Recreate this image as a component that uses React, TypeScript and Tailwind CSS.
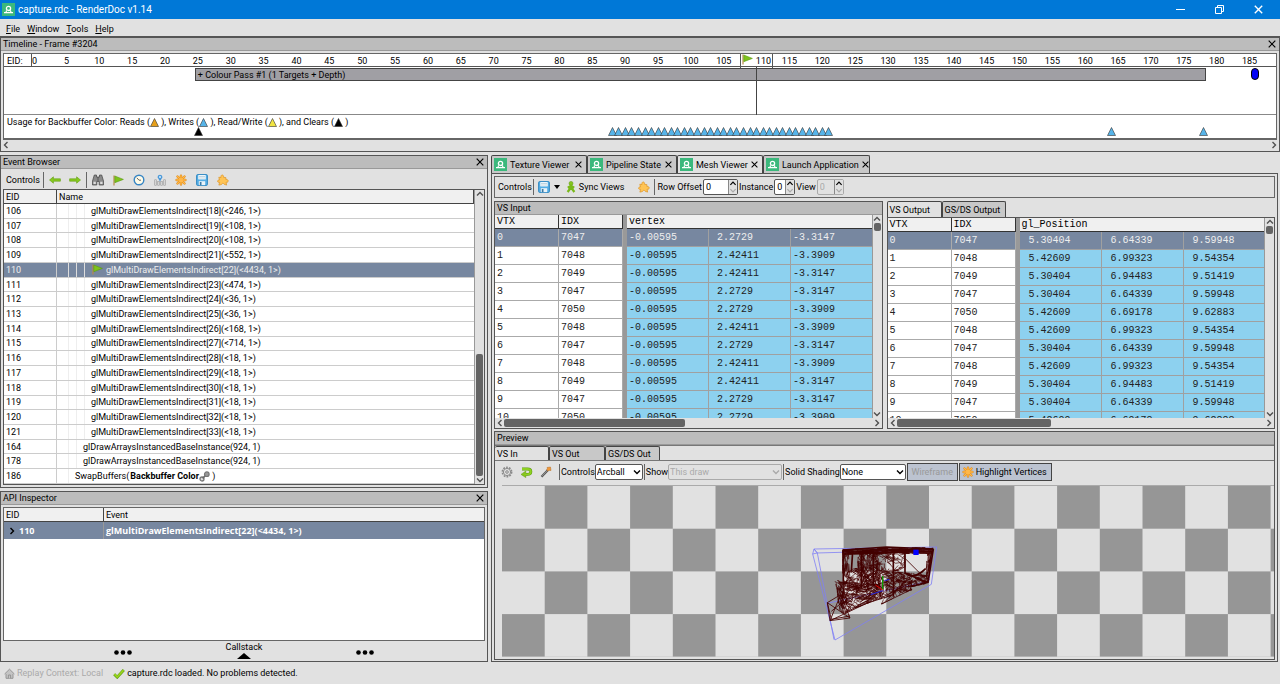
import type { ReactNode } from "react";
import clsx from "clsx";

const events = [
  { eid: 106, name: "glMultiDrawElementsIndirect[18](<246, 1>)", depth: 3 },
  { eid: 107, name: "glMultiDrawElementsIndirect[19](<108, 1>)", depth: 3 },
  { eid: 108, name: "glMultiDrawElementsIndirect[20](<108, 1>)", depth: 3 },
  { eid: 109, name: "glMultiDrawElementsIndirect[21](<552, 1>)", depth: 3 },
  { eid: 110, name: "glMultiDrawElementsIndirect[22](<4434, 1>)", depth: 3 },
  { eid: 111, name: "glMultiDrawElementsIndirect[23](<474, 1>)", depth: 3 },
  { eid: 112, name: "glMultiDrawElementsIndirect[24](<36, 1>)", depth: 3 },
  { eid: 113, name: "glMultiDrawElementsIndirect[25](<36, 1>)", depth: 3 },
  { eid: 114, name: "glMultiDrawElementsIndirect[26](<168, 1>)", depth: 3 },
  { eid: 115, name: "glMultiDrawElementsIndirect[27](<714, 1>)", depth: 3 },
  { eid: 116, name: "glMultiDrawElementsIndirect[28](<18, 1>)", depth: 3 },
  { eid: 117, name: "glMultiDrawElementsIndirect[29](<18, 1>)", depth: 3 },
  { eid: 118, name: "glMultiDrawElementsIndirect[30](<18, 1>)", depth: 3 },
  { eid: 119, name: "glMultiDrawElementsIndirect[31](<18, 1>)", depth: 3 },
  { eid: 120, name: "glMultiDrawElementsIndirect[32](<18, 1>)", depth: 3 },
  { eid: 121, name: "glMultiDrawElementsIndirect[33](<18, 1>)", depth: 3 },
  { eid: 164, name: "glDrawArraysInstancedBaseInstance(924, 1)", depth: 2 },
  { eid: 178, name: "glDrawArraysInstancedBaseInstance(924, 1)", depth: 2 },
  { eid: 186, name: "SwapBuffers(", depth: 1 },
];

const indices = ["7047", "7048", "7049", "7047", "7050", "7048", "7047", "7048", "7049", "7047", "7050"];

const vsInput: Record<string, string[]> = {
  "7047": ["-0.00595", "2.2729", "-3.3147"],
  "7048": ["-0.00595", "2.42411", "-3.3909"],
  "7049": ["-0.00595", "2.42411", "-3.3147"],
  "7050": ["-0.00595", "2.2729", "-3.3909"],
};

const vsOutput: Record<string, string[]> = {
  "7047": ["5.30404", "6.64339", "9.59948"],
  "7048": ["5.42609", "6.99323", "9.54354"],
  "7049": ["5.30404", "6.94483", "9.51419"],
  "7050": ["5.42609", "6.69178", "9.62883"],
};

const ticks = Array.from({ length: 37 }, (_, i) => (i + 1) * 5);
const writes = [...Array.from({ length: 34 }, (_, i) => 88 + i), 164, 178];

// event id -> percentage along the timeline
const at = (eid: number) => ((eid * 6.57 + 30) / 1273) * 100;

/* ---------- icons ---------- */

function Logo() {
  return (
    <svg viewBox="0 0 13 13" className="size-[13px] shrink-0">
      <rect width="13" height="13" fill="#3bb87c" />
      <circle cx="6.5" cy="5.4" r="2.1" fill="none" stroke="#fff" strokeWidth="1.3" />
      <path d="M2 9.6h9M4.6 7.4l-.6 2M8.4 7.4l.6 2" fill="none" stroke="#fff" strokeWidth="1.2" />
    </svg>
  );
}

function Close({ className = "size-2" }: { className?: string }) {
  return (
    <svg viewBox="0 0 8 8" className={className} fill="none" stroke="currentColor" strokeWidth="1.2">
      <path d="M.7.7l6.6 6.6M7.3.7L.7 7.3" />
    </svg>
  );
}

function Flag() {
  return (
    <svg viewBox="0 0 11 11" className="size-[11px] shrink-0">
      <path d="M1 .5v10" stroke="#b98a4a" strokeWidth="1.2" />
      <path d="M1.8 1l8.6 3.4-8.6 3.3z" fill="#7fc31c" stroke="#5a9a12" strokeWidth=".6" />
    </svg>
  );
}

function Arrow({ right = false }: { right?: boolean }) {
  return (
    <svg viewBox="0 0 12 8" className={clsx("h-2 w-3", right && "rotate-180")}>
      <path d="M.5 4L4.4.8v2h7v2.4h-7v2z" fill="#86c81e" stroke="#62a010" strokeWidth=".6" />
    </svg>
  );
}

function Binoculars() {
  return (
    <svg viewBox="0 0 12 12" className="size-3">
      <path d="M2.3 1h2.2v2h3V1h2.2l1.8 6v4H7.2V7.5H4.8V11H.5V7z" fill="#8a8a8a" stroke="#444" strokeWidth=".7" />
      <path d="M1.5 7.8h2.3v2.2H1.5zM8.2 7.8h2.3v2.2H8.2z" fill="#ddd" />
      <path d="M6 3v4" stroke="#444" strokeWidth=".7" />
    </svg>
  );
}

function Clock() {
  return (
    <svg viewBox="0 0 12 12" className="size-3">
      <circle cx="6" cy="6" r="4.8" fill="#fffbe8" stroke="#3685c5" strokeWidth="1.4" />
      <path d="M3.8 3.8L6 6.2h2" fill="none" stroke="#666" />
    </svg>
  );
}

function Counter() {
  return (
    <svg viewBox="0 0 12 12" className="size-3">
      <path d="M1.5 11.5V5.5M4.5 11.5V7M7.5 11.5V7M10.5 11.5V5.5" stroke="#929292" strokeWidth="2.1" />
      <path d="M1.5 11V6M4.5 11V7.5M7.5 11V7.5M10.5 11V6" stroke="#d5d5d5" />
      <path d="M6 7.4L3.7 3.4C3.3-.2 8.7-.2 8.3 3.4z" fill="#4c99d8" />
      <circle cx="6" cy="3" r="1" fill="#d9efff" />
    </svg>
  );
}

function Asterisk() {
  return (
    <svg viewBox="0 0 12 12" className="size-3 shrink-0" strokeLinecap="round">
      <path d="M6 4.2V1.6M6 7.8v2.6M4 6H1.6M8 6h2.4M4.6 4.6L2.5 2.5M7.4 4.6l2.1-2.1M4.6 7.4L2.5 9.5M7.4 7.4l2.1 2.1" stroke="#df8a17" strokeWidth="2.4" />
      <path d="M6 6V1.6M6 6v4.4M6 6H1.6M6 6h4.4M6 6L2.5 2.5M6 6l3.5-3.5M6 6L2.5 9.5M6 6l3.5 3.5" stroke="#ffb84a" strokeWidth="1.3" />
    </svg>
  );
}

function Save() {
  return (
    <svg viewBox="0 0 12 12" className="size-3">
      <rect x=".6" y=".6" width="10.8" height="10.8" rx="1" fill="#55aee5" stroke="#3389c2" />
      <path d="M2.3 1.1h7.4v4.3H2.3z" fill="#fff" />
      <path d="M3 2.5h6M3 4h6" stroke="#9bc" strokeWidth=".6" />
      <path d="M2.8 7.2h6.4v3.9H2.8z" fill="#e9f3f9" />
      <path d="M3.8 8h1.7v3.1H3.8z" fill="#3d7aa4" />
    </svg>
  );
}

function Puzzle() {
  return (
    <svg viewBox="0 0 12 12" className="size-3">
      <path
        d="M1.8 3.2l2.2.4C3.1 0 7.3.3 6.5 3.3l2.5.4-.2 1.8c3.2-.5 3.2 3.3.3 2.7l.5 2.9-2.5-.9c-.9-1.3-1.7-1.3-2.6.3l-2.6.6.7-2.8C-.4 8.9.3 5.4 2.5 6z"
        fill="#ffc455"
        stroke="#e09a30"
        strokeWidth=".8"
      />
    </svg>
  );
}

function SyncPerson() {
  return (
    <svg viewBox="0 0 10 12" className="h-3 w-2.5">
      <circle cx="5" cy="2.4" r="2" fill="#86c61c" stroke="#5c9411" strokeWidth=".5" />
      <path d="M5 4v3.4M5 6.5L1.6 11M5 6.5L8.4 11M1.8 6.8L5 4.8l3.2 2" fill="none" stroke="#79b919" strokeWidth="2.2" />
    </svg>
  );
}

function Gear() {
  return (
    <svg viewBox="0 0 12 12" className="size-3" fill="none" stroke="#8a8a8a">
      <circle cx="6" cy="6" r="4.7" strokeWidth="1.5" strokeDasharray="1.8 1.15" />
      <circle cx="6" cy="6" r="3.6" />
      <circle cx="6" cy="6" r="1.3" />
    </svg>
  );
}

function Reset() {
  return (
    <svg viewBox="0 0 13 12" className="h-3 w-[13px]">
      <path d="M2 3h5.5c4.5 0 4.5 5.4 0 5.4H5" fill="none" stroke="#5c9a10" strokeWidth="2.8" />
      <path d="M5.8 5v6.6L1 8.4z" fill="#86c61c" stroke="#5c9a10" strokeWidth=".5" />
      <path d="M2 3h5.5c4.5 0 4.5 5.4 0 5.4H5" fill="none" stroke="#8ed022" strokeWidth="1.8" />
    </svg>
  );
}

function Wand() {
  return (
    <svg viewBox="0 0 12 12" className="size-3">
      <path d="M1.5 10.8L8 4" stroke="#555" strokeWidth="2.2" />
      <path d="M1.8 10.3L7.5 4.4" stroke="#aaa" strokeWidth=".7" />
      <path d="M7 1.5l3.5-.5.5 3.5-2.2-.2-.8.9-1.4-1.4.8-.9z" fill="#f39a3a" stroke="#b06a25" strokeWidth=".5" />
    </svg>
  );
}

function Link() {
  return (
    <svg viewBox="0 0 11 11" className="size-[11px]">
      <circle cx="3" cy="8" r="2" fill="#ddd" stroke="#777" strokeWidth="1.3" />
      <path d="M3.6 7.4l3.6-3.6" stroke="#666" strokeWidth="1.6" />
      <circle cx="7.8" cy="3.2" r="2.3" fill="#999" stroke="#777" strokeWidth="1.2" />
    </svg>
  );
}

function Home() {
  return (
    <svg viewBox="0 0 11 11" className="size-[11px]" fill="#c4c4c4" stroke="#909090" strokeWidth=".9">
      <path d="M2 5.5v4.8h7V5.5" />
      <path d="M.6 6l4.9-4.8L10.4 6M4.4 10.3V7h2.2v3.3" />
    </svg>
  );
}

function Tick() {
  return (
    <svg viewBox="0 0 12 11" className="h-[11px] w-3">
      <path d="M1.2 6.2l3 3L10.8 2" fill="none" stroke="#5c9a10" strokeWidth="2.8" />
      <path d="M1.4 6.2l2.8 2.8L10.6 2.2" fill="none" stroke="#98d41e" strokeWidth="1.8" />
    </svg>
  );
}

function Triangle({ fill }: { fill: string }) {
  return (
    <svg viewBox="0 0 9 9" className="size-[9px]">
      <path d="M4.5 .5l4 8h-8z" fill={fill} stroke="#333" strokeWidth=".6" />
    </svg>
  );
}

function Chevron({ dir, className }: { dir: "up" | "down" | "left" | "right"; className?: string }) {
  const d = {
    up: "M1 5.5l3-3 3 3",
    down: "M1 2.5l3 3 3-3",
    left: "M5.5 1l-3 3 3 3",
    right: "M2.5 1l3 3-3 3",
  }[dir];
  return (
    <svg viewBox="0 0 8 8" className={clsx("shrink-0", className ?? "size-2 text-[#505050]")} fill="none" stroke="currentColor" strokeWidth="1.4">
      <path d={d} />
    </svg>
  );
}

/* ---------- shared bits ---------- */

function Dock({ title, closable = true, children }: { title: string; closable?: boolean; children: ReactNode }) {
  return (
    <section className="flex min-h-0 min-w-0 flex-col border border-[#555] bg-[#e1e1e1]">
      <header className="flex h-[13px] shrink-0 items-center justify-between border-b border-[#999] bg-[#bcbcbc] px-0.5">
        <h2>{title}</h2>
        {closable && (
          <button aria-label={`Close ${title}`} className="px-px">
            <Close />
          </button>
        )}
      </header>
      {children}
    </section>
  );
}

function Separator() {
  return <div className="h-4 w-px shrink-0 bg-[#666]" />;
}

function HScroll({ thumb }: { thumb?: string }) {
  return (
    <div className="flex h-2.5 shrink-0 items-center bg-[#e1e1e1] px-px">
      <Chevron dir="left" />
      <div className="h-2 flex-1">{thumb && <div className={clsx("h-2 rounded-xs bg-[#646464]", thumb)} />}</div>
      <Chevron dir="right" />
    </div>
  );
}

function VScroll({ children }: { children: ReactNode }) {
  return (
    <div className="flex w-2.5 shrink-0 flex-col items-center border-l border-[#999] bg-[#e1e1e1]">
      <Chevron dir="up" />
      <div className="flex w-full flex-1 flex-col px-px">{children}</div>
      <Chevron dir="down" />
    </div>
  );
}

function Spin({ id, label, width, disabled }: { id: string; label: string; width: string; disabled?: boolean }) {
  return (
    <div className="flex items-center">
      <label htmlFor={id}>{label}</label>
      <div className={clsx("ml-px flex h-4 rounded-xs border", disabled ? "border-[#aaa]" : "border-[#555] bg-white")}>
        <input id={id} defaultValue="0" disabled={disabled} className={clsx("pl-0.5 disabled:text-[#aaa]", width)} />
        <div className="flex flex-col border-l border-[#888] bg-[#e1e1e1]">
          <button disabled={disabled} aria-label={`Increase ${label}`} className="h-[7px]">
            <Chevron dir="up" className="h-[7px] w-2" />
          </button>
          <button disabled={disabled} aria-label={`Decrease ${label}`} className="h-[7px] text-[#aaa]">
            <Chevron dir="down" className="h-[7px] w-2" />
          </button>
        </div>
      </div>
    </div>
  );
}

function Combo({ id, label, value, width, disabled }: { id: string; label: string; value: string; width: string; disabled?: boolean }) {
  return (
    <div className="flex items-center">
      <label htmlFor={id}>{label}</label>
      <div className={clsx("relative", width)}>
        <select
          id={id}
          disabled={disabled}
          className={clsx("block h-4 w-full appearance-none rounded-xs border px-px opacity-100", disabled ? "border-[#aaa] text-[#aaa]" : "border-[#555] bg-white")}
        >
          <option>{value}</option>
        </select>
        <Chevron dir="down" className={clsx("pointer-events-none absolute top-1 right-0.5 size-2", disabled && "text-[#aaa]")} />
      </div>
    </div>
  );
}

function VertexTable({ column, data, indent }: { column: string; data: Record<string, string[]>; indent: string }) {
  return (
    <table className="w-full table-fixed border-separate border-spacing-0 text-left font-['Liberation_Mono',monospace] text-[10px] leading-3">
      <colgroup>
        <col className="w-16" />
        <col className="w-16" />
        <col className="w-1" />
        <col className="w-[82px]" />
        <col className="w-[82px]" />
        <col className="w-[82px]" />
      </colgroup>
      <thead className="bg-[#f0f0f0]">
        <tr className="h-3.5">
          <th className="border-r border-b border-[#333] px-0.5 font-normal">VTX</th>
          <th className="border-r border-b border-[#333] px-0.5 font-normal">IDX</th>
          <th className="bg-[#999]" />
          <th colSpan={3} className="border-r border-b border-[#333] px-0.5 font-normal">{column}</th>
        </tr>
      </thead>
      <tbody>
        {indices.map((idx, row) => (
          <tr key={row} className={clsx("h-[18px]", row === 0 ? "bg-[#7787a0] text-[#eee]" : "text-[#222]")}>
            <td className="border-r border-b border-[#aaa] px-0.5">{row}</td>
            <td className="border-r border-b border-[#aaa] px-0.5">{idx}</td>
            <td className="bg-[#999]" />
            {data[idx].map((v, i) => (
              <td key={i} className={clsx("border-r border-b border-[#a0a0a0]", row > 0 && "bg-[#8dd1ef]", v.startsWith("-") ? "pl-0.5" : indent)}>
                {v}
              </td>
            ))}
          </tr>
        ))}
      </tbody>
    </table>
  );
}

/* ---------- timeline ---------- */

function Timeline() {
  return (
    <Dock title="Timeline - Frame #3204">
      <div className="m-0.5 mb-0 border border-[#666] bg-white">
        <div className="flex h-[13px] items-stretch border-b border-[#555] pr-2.5 leading-[14px]">
          <span className="w-[27px] pl-[3px]">EID:</span>
          <span className="w-[19px] border-l border-[#555]">0</span>
          <div className="grid flex-1 grid-cols-[repeat(37,minmax(0,1fr))] text-center">
            {ticks.map((t) =>
              t === 110 ? (
                <span key={t} className="flex justify-between border-x border-[#555] px-px">
                  <Flag />
                  110
                </span>
              ) : (
                <span key={t}>{t}</span>
              ),
            )}
          </div>
        </div>
        <div className="relative h-12 border-b border-[#888] pt-px">
          <div
            className="flex h-[13px] items-center border border-[#444] bg-[#a09fa4] pl-0.5"
            style={{ marginLeft: `${at(24.5)}%`, width: `${at(178.5) - at(24.5)}%` }}
          >
            + Colour Pass #1 (1 Targets + Depth)
          </div>
          <div className="absolute top-0 h-12 w-px bg-[#444]" style={{ left: `${at(110)}%` }} />
          <div className="absolute top-px h-3 w-2 -translate-x-1 rounded-sm border border-black bg-[#0000f5]" style={{ left: `${at(186)}%` }} />
        </div>
        <div className="relative h-6 border-b border-[#666] pt-px pl-[3px]">
          <p className="flex items-center">
            Usage for Backbuffer Color: Reads (<Triangle fill="#e69f1a" />
            &nbsp;), Writes (<Triangle fill="#56b4e9" />
            &nbsp;), Read/Write (<Triangle fill="#f0e442" />
            &nbsp;), and Clears (<Triangle fill="#000" />
            &nbsp;)
          </p>
          <div className="absolute bottom-[2px] -translate-x-1" style={{ left: `${at(25)}%` }}>
            <Triangle fill="#000" />
          </div>
          {writes.map((eid) => (
            <div key={eid} className="absolute bottom-[2px] -translate-x-1" style={{ left: `${at(eid)}%` }}>
              <Triangle fill="#56b4e9" />
            </div>
          ))}
        </div>
      </div>
      <HScroll />
    </Dock>
  );
}

/* ---------- left column ---------- */

function EventBrowser() {
  return (
    <Dock title="Event Browser">
      <div className="flex h-5 shrink-0 items-center gap-[5px] pt-0.5 pl-[5px]">
        <div className="flex items-center gap-[3px]">
          <span>Controls</span>
          <Separator />
        </div>
        <div className="flex items-center gap-2">
          <button aria-label="Previous event"><Arrow /></button>
          <button aria-label="Next event"><Arrow right /></button>
        </div>
        <Separator />
        <div className="flex items-center gap-[9px]">
          <button aria-label="Find"><Binoculars /></button>
          <button aria-label="Bookmark"><Flag /></button>
          <button aria-label="Time events"><Clock /></button>
          <button aria-label="Counters"><Counter /></button>
          <button aria-label="Highlight"><Asterisk /></button>
          <button aria-label="Export"><Save /></button>
          <button aria-label="Extensions"><Puzzle /></button>
        </div>
      </div>
      <div className="mx-0.5 mb-0.5 flex min-h-0 flex-1 border border-[#555] bg-white">
        <table className="h-full flex-1 border-separate border-spacing-0 text-left">
          <thead className="bg-[#f0f0f0]">
            <tr className="h-3.5">
              <th className="w-[53px] border-r border-b border-[#444] pl-0.5 font-normal">EID</th>
              <th className="border-r border-b border-[#444] pl-0.5 font-normal">Name</th>
            </tr>
          </thead>
          <tbody>
            {events.map((e) => {
              const current = e.eid === 110;
              return (
                <tr key={e.eid} className={clsx(current && "bg-[#7787a0] text-[#eee]")}>
                  <td className="border-r border-b border-[#ccc] p-0 pl-0.5">{e.eid}</td>
                  <td className="h-px border-b border-[#ccc] p-0 pl-[11px]">
                    <div className="flex h-full items-center">
                      {Array.from({ length: e.depth }, (_, i) => (
                        <span key={i} className={clsx("h-full w-2 border-l", current ? "border-[#ddd]" : "border-[#eee]")} />
                      ))}
                      {current && (
                        <span className="mr-1 flex">
                          <Flag />
                        </span>
                      )}
                      <span className="-ml-px">{e.name}</span>
                      {e.eid === 186 && (
                        <span className="flex items-center">
                          <a href="#backbuffer" className="pl-px font-bold">Backbuffer Color</a>
                          <Link />
                          &nbsp;)
                        </span>
                      )}
                    </div>
                  </td>
                </tr>
              );
            })}
          </tbody>
        </table>
        <VScroll>
          <div className="flex-[56]" />
          <div className="flex-[44] rounded-xs bg-[#646464]" />
        </VScroll>
      </div>
    </Dock>
  );
}

function ApiInspector() {
  return (
    <Dock title="API Inspector">
      <div className="m-0.5 mb-0 flex-1 border border-[#666] bg-white">
        <table className="w-full table-fixed border-separate border-spacing-0 text-left">
          <thead className="bg-[#f0f0f0]">
            <tr className="h-3.5">
              <th className="w-[100px] border-r border-b border-[#444] pl-0.5 font-normal">EID</th>
              <th className="border-b border-[#444] pl-0.5 font-normal">Event</th>
            </tr>
          </thead>
          <tbody>
            <tr className="h-[17px] bg-[#7787a0] font-['Open_Sans',sans-serif] font-bold text-white">
              <td className="border-r border-[#999] p-0 pl-1">
                <div className="flex items-center gap-[3px]">
                  <Chevron dir="right" className="size-2 text-black" />
                  110
                </div>
              </td>
              <td className="p-0 pl-0.5">glMultiDrawElementsIndirect[22](&lt;4434, 1&gt;)</td>
            </tr>
          </tbody>
        </table>
      </div>
      <div className="flex h-5 shrink-0 items-start justify-center">
        <Dots />
        <button className="mx-[94px] flex flex-col items-center">
          Callstack
          <svg viewBox="0 0 14 6" className="h-1.5 w-3.5">
            <path d="M7 0l7 6H0z" />
          </svg>
        </button>
        <Dots />
      </div>
    </Dock>
  );
}

function Dots() {
  return (
    <svg viewBox="0 0 18 5" className="mt-[9px] h-[5px] w-[18px]">
      <circle cx="2.5" cy="2.5" r="2.3" />
      <circle cx="9" cy="2.5" r="2.3" />
      <circle cx="15.5" cy="2.5" r="2.3" />
    </svg>
  );
}

/* ---------- mesh preview ---------- */

type Quad = [number, number][];

const patches: { quad: Quad; count: number; reach: number }[] = [
  { quad: [[158, 58], [430, 52], [425, 70], [160, 72]], count: 120, reach: 0.25 },
  { quad: [[158, 62], [178, 62], [180, 158], [158, 130]], count: 30, reach: 0.6 },
  { quad: [[205, 66], [262, 66], [262, 180], [200, 190]], count: 90, reach: 0.35 },
  { quad: [[176, 120], [270, 100], [270, 190], [150, 180]], count: 110, reach: 0.3 },
  { quad: [[250, 70], [345, 72], [345, 118], [260, 130]], count: 45, reach: 0.4 },
  { quad: [[255, 120], [365, 130], [365, 180], [275, 222]], count: 120, reach: 0.3 },
  { quad: [[135, 155], [280, 165], [270, 205], [160, 248]], count: 150, reach: 0.25 },
  { quad: [[138, 152], [172, 150], [170, 260], [148, 240]], count: 50, reach: 0.35 },
  { quad: [[340, 128], [418, 138], [412, 160], [340, 175]], count: 50, reach: 0.35 },
  { quad: [[414, 60], [430, 58], [415, 158], [406, 140]], count: 24, reach: 0.5 },
];

function buildMesh() {
  let seed = 42;
  const rand = () => {
    seed = (seed * 16807) % 2147483647;
    return seed / 2147483647;
  };
  const clamp = (n: number) => Math.min(1, Math.max(0, n));
  let d = "";
  for (const { quad: [a, b, c, e], count, reach } of patches) {
    const point = (u: number, v: number) =>
      [0, 1].map((k) => ((a[k] * (1 - u) + b[k] * u) * (1 - v) + (e[k] * (1 - u) + c[k] * u) * v).toFixed(1)).join(" ");
    for (let i = 0; i < count; i++) {
      const u = rand();
      const v = rand();
      const u2 = clamp(u + (rand() - 0.5) * 2 * reach);
      const v2 = clamp(v + (rand() - 0.5) * 2 * reach);
      d += `M${point(u, v)}L${point(u2, v2)}L${point(clamp(u2 + (rand() - 0.5) * reach), clamp(v2 + (rand() - 0.5) * reach))}`;
    }
  }
  return d;
}

const mesh = buildMesh();

function MeshView() {
  return (
    <svg viewBox="0 0 772 174" preserveAspectRatio="xMinYMin slice" className="mb-0.5 ml-[7px] min-h-0 flex-1 border-t border-[#aaa]">
      <defs>
        <pattern id="checker" width="85.4" height="85.4" patternUnits="userSpaceOnUse">
          <rect width="85.4" height="85.4" fill="#e1e1e1" />
          <path d="M42.7 0h42.7v42.7H42.7zM0 42.7h42.7v42.7H0z" fill="#969696" />
        </pattern>
      </defs>
      <rect width="772" height="170.8" fill="url(#checker)" />
      <g transform="translate(288 44) scale(.3333)" fill="none" strokeWidth="3">
        <path d="M72 57l368-6-16 112L135 330 68 72zM72 57l10 12 50 260M68 72l14-3 348-10M82 69L72 57M430 59l-14 98M112 220l304-66" stroke="#7f7ff5" strokeWidth="2.4" />
        <path d={mesh} stroke="#430000" strokeWidth="2" />
        <path d="M158 60l132-9 140 6M158 72l270-8M160 60v95M188 65l-4 60M214 65v110M250 70v100M310 70v130M345 72v60M430 57l-16 100-50 12M345 128l65 30M345 128c20 20 45 5 62-12" stroke="#430000" strokeWidth="5" />
        <path
          d="M112 218l40-24 28 70-60 8zM112 218l68 46M120 272l32-78M112 218l12 50 56-10M124 244l36-30M120 272l110-52 80-26M164 250l80-45M275 222l90-44M265 208l98-50M285 215l60-60M345 85l60 60"
          stroke="#430000"
          strokeWidth="2.6"
        />
        <path d="M278 138v40" stroke="#0a9a00" strokeWidth="4" />
        <path d="M256 165l22 15" stroke="#e00000" />
        <path d="M242 194l36-12M284 152l14-4" stroke="#2222dd" />
        <rect x="370" y="59" width="16" height="16" fill="#0000ff" />
      </g>
    </svg>
  );
}

/* ---------- right column ---------- */

const viewerTabs = [
  { name: "Texture Viewer", width: "w-24" },
  { name: "Pipeline State", width: "w-[90px]" },
  { name: "Mesh Viewer", width: "w-[86px]" },
  { name: "Launch Application", width: "w-[107px]" },
];

function Tab({ active, className, children }: { active?: boolean; className: string; children: ReactNode }) {
  return (
    <button
      role="tab"
      aria-selected={!!active}
      className={clsx("rounded-t-xs border border-b-0 border-[#444] px-0.5 text-left", active ? "bg-[#e1e1e1]" : "bg-[#c8c8c8]", className)}
    >
      {children}
    </button>
  );
}

function MeshToolbar() {
  return (
    <div className="mt-0.5 flex h-[22px] shrink-0 items-center border border-[#666] pl-[3px]">
      <span className="mr-px">Controls</span>
      <Separator />
      <button aria-label="Save mesh" className="ml-1 flex items-center gap-1">
        <Save />
        <svg viewBox="0 0 6 4" className="h-1 w-1.5">
          <path d="M0 0h6L3 4z" />
        </svg>
      </button>
      <button className="ml-1.5 flex items-center gap-[3px]">
        <SyncPerson />
        Sync Views
      </button>
      <button aria-label="Extensions" className="mr-1 ml-3.5"><Puzzle /></button>
      <Separator />
      <div className="flex gap-px pl-0.5">
        <Spin id="row-offset" label="Row Offset" width="w-6" />
        <Spin id="instance" label="Instance" width="w-2.5" />
        <Spin id="view" label="View" width="w-4" disabled />
      </div>
    </div>
  );
}

function Preview() {
  return (
    <Dock title="Preview" closable={false}>
      <div role="tablist" className="flex h-4 shrink-0 border-t border-b border-[#777]">
        <Tab active className="w-[54px] border-l-0">VS In</Tab>
        <Tab className="w-14">VS Out</Tab>
        <Tab className="w-[55px]">GS/DS Out</Tab>
      </div>
      <div className="flex h-6 shrink-0 items-center gap-px pb-0.5 pl-1.5">
        <button aria-label="Settings"><Gear /></button>
        <button aria-label="Reset camera" className="mx-1.5"><Reset /></button>
        <button aria-label="Auto-fit" className="mr-1.5"><Wand /></button>
        <Separator />
        <Combo id="camera" label="Controls" value="Arcball" width="w-12" />
        <Separator />
        <Combo id="show" label="Show" value="This draw" width="w-[114px]" disabled />
        <Separator />
        <Combo id="shading" label="Solid Shading" value="None" width="w-[66px]" />
        <button disabled className="h-[18px] w-[51px] border border-[#444] bg-[#bcc3d0] text-[#999]">Wireframe</button>
        <button className="flex h-[18px] w-[93px] items-center gap-0.5 border border-[#444] bg-[#bcc3d0] px-0.5">
          <Asterisk />
          Highlight Vertices
        </button>
      </div>
      <MeshView />
    </Dock>
  );
}

function Viewer() {
  return (
    <main className="flex min-h-0 min-w-0 flex-col">
      <div role="tablist" className="flex h-[18px] shrink-0">
        {viewerTabs.map(({ name, width }) => (
          <div
            key={name}
            className={clsx("flex items-center gap-[3px] rounded-t-xs border border-b-0 border-[#444] px-0.5", width, name === "Mesh Viewer" ? "bg-[#e1e1e1]" : "bg-[#c8c8c8]")}
          >
            <button role="tab" aria-selected={name === "Mesh Viewer"} className="flex flex-1 items-center gap-[3px] whitespace-nowrap">
              <Logo />
              {name}
            </button>
            <button aria-label={`Close ${name}`} className="pr-0.5">
              <Close className="size-[7px]" />
            </button>
          </div>
        ))}
      </div>
      <div className="flex min-h-0 flex-1 flex-col border border-[#555] px-0.5 pb-px">
        <MeshToolbar />
        <div className="mt-[3px] grid h-[228px] shrink-0 grid-cols-2 gap-1">
          <Dock title="VS Input" closable={false}>
            <div className="flex min-h-0 flex-1">
              <div className="min-w-0 flex-1 overflow-hidden bg-white">
                <VertexTable column="vertex" data={vsInput} indent="pl-2" />
              </div>
              <VScroll>
                <div className="h-2 rounded-xs bg-[#646464]" />
              </VScroll>
            </div>
            <HScroll thumb="w-[49%]" />
          </Dock>
          <section className="flex min-h-0 min-w-0 flex-col">
            <div role="tablist" className="flex h-4 shrink-0">
              <Tab active className="w-[55px]">VS Output</Tab>
              <Tab className="w-16">GS/DS Output</Tab>
            </div>
            <div className="flex min-h-0 flex-1 flex-col border border-[#555]">
              <div className="flex min-h-0 flex-1">
                <div className="min-w-0 flex-1 overflow-hidden bg-white">
                  <VertexTable column="gl_Position" data={vsOutput} indent="pl-[9px]" />
                </div>
                <VScroll>
                  <div className="h-2 rounded-xs bg-[#646464]" />
                </VScroll>
              </div>
              <HScroll thumb="w-[42%]" />
            </div>
          </section>
        </div>
        <div className="mt-0.5 grid min-h-0 flex-1">
          <Preview />
        </div>
      </div>
    </main>
  );
}

export default function App() {
  return (
    <div className="flex h-screen w-full flex-col overflow-hidden bg-[#e1e1e1] font-['Roboto','DejaVu_Sans',sans-serif] text-[9px] leading-3 whitespace-nowrap text-black">
      <header className="flex h-[19px] shrink-0 items-center bg-[#0078d7] pl-0.5 text-white">
        <Logo />
        <h1 className="flex-1 pl-[3px] text-[10px]">capture.rdc - RenderDoc v1.14</h1>
        <button aria-label="Minimize" className="flex w-[39px] justify-center">
          <svg viewBox="0 0 9 9" className="size-[9px]" stroke="currentColor"><path d="M0 4.5h9" /></svg>
        </button>
        <button aria-label="Restore" className="flex w-[39px] justify-center">
          <svg viewBox="0 0 9 9" className="size-[9px]" fill="none" stroke="currentColor">
            <path d="M.5 2.5h6v6h-6zM2.5 2.5v-2h6v6h-2" />
          </svg>
        </button>
        <button aria-label="Close window" className="mr-0.5 flex w-[39px] justify-center">
          <Close className="size-[9px]" />
        </button>
      </header>
      <nav className="flex h-[18px] shrink-0 items-center gap-[7px] border-b border-[#555] pt-0.5 pl-1.5">
        {["File", "Window", "Tools", "Help"].map((item) => (
          <button key={item}>
            <span className="underline">{item[0]}</span>
            {item.slice(1)}
          </button>
        ))}
      </nav>
      <div className="grid h-[115px] shrink-0">
        <Timeline />
      </div>
      <div className="mt-[3px] grid min-h-0 flex-1 grid-cols-[488fr_787fr] gap-[3px] pr-0.5">
        <div className="grid min-h-0 min-w-0 grid-rows-[333fr_171fr] gap-[3px]">
          <EventBrowser />
          <ApiInspector />
        </div>
        <Viewer />
      </div>
      <footer className="flex h-[22px] shrink-0 items-center pl-1">
        <Home />
        <span className="pl-0.5 text-[#aaa]">Replay Context: Local</span>
        <span className="flex items-center gap-0.5 pl-2.5">
          <Tick />
          capture.rdc loaded. No problems detected.
        </span>
      </footer>
    </div>
  );
}
